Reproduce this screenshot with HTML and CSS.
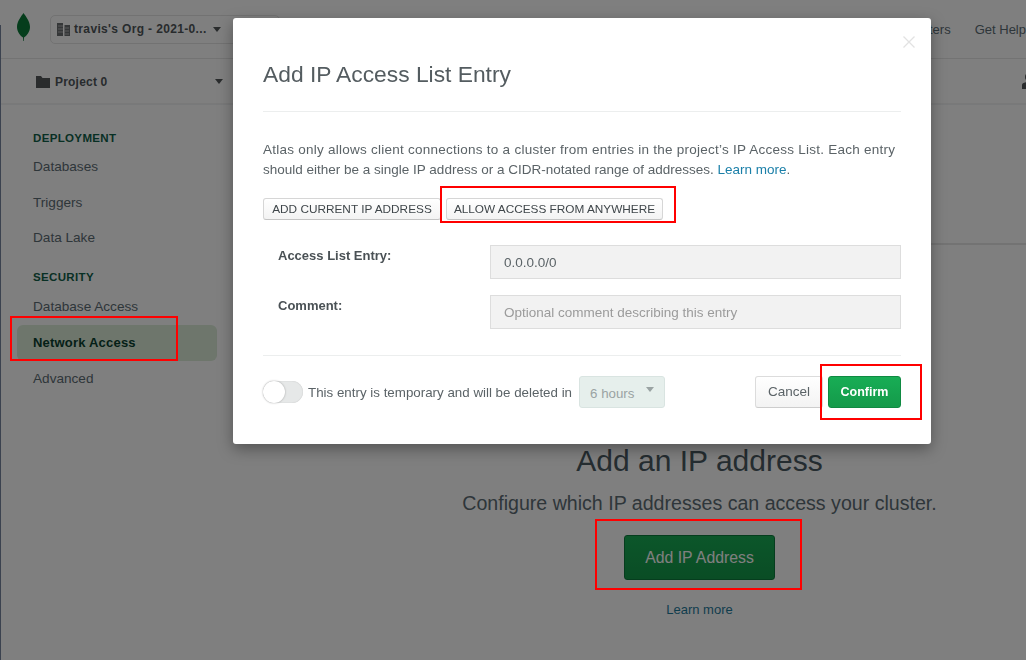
FILE: index.html
```html
<!DOCTYPE html>
<html lang="en">
<head>
<meta charset="utf-8">
<title>Add IP Access List Entry</title>
<link rel="stylesheet" href="styles.css">
</head>
<body>
<div class="app">
  <span class="edge"></span>
  <header class="topbar">
    <svg class="leaf" width="13" height="28" viewBox="0 0 13 28"><path d="M6.500 0C8.500 3 13 8 13 14C13 19 9.500 23 7 24.500L6.800 28H6.200L6 24.500C3.500 23 0 19 0 14C0 8 4.500 3 6.500 0Z" fill="#0b7a38"/></svg>
    <div class="org">
      <svg class="org-icon" width="13" height="13" viewBox="0 0 13 13"><path d="M0 0H6V13H0ZM7.500 2H13V13H7.500Z" fill="#6a6f71"/><path d="M1 3H6M1 6H6M1 9H6M7.500 5H12M7.500 8H12M7.500 11H12" stroke="#b4b4b4" stroke-width="1"/></svg>
      <span class="org-name">travis's Org - 2021-0...</span>
      <span class="caret"></span>
    </div>
    <nav class="toplinks"><span>Clusters</span><span>Get Help</span></nav>
  </header>
  <div class="projectbar">
    <div class="project">
      <svg width="14" height="12" viewBox="0 0 14 12"><path d="M0 0H5L6.500 2H14V12H0Z" fill="#54595b"/></svg>
      <span class="project-name">Project 0</span>
      <span class="caret"></span>
    </div>
    <svg class="user" width="12" height="16" viewBox="0 0 12 16"><circle cx="7" cy="4" r="4" fill="#54595b"/><path d="M0 16V12C0 10 2 9 7 9S14 10 14 12V16Z" fill="#54595b"/></svg>
  </div>
  <div class="main">
    <aside class="sidebar">
      <h4 class="side-head">DEPLOYMENT</h4>
      <a class="side-item">Databases</a>
      <a class="side-item">Triggers</a>
      <a class="side-item">Data Lake</a>
      <h4 class="side-head second">SECURITY</h4>
      <a class="side-item">Database Access</a>
      <a class="side-item active">Network Access</a>
      <a class="side-item">Advanced</a>
    </aside>
    <section class="content">
      <div class="content-rule"></div>
      <div class="empty">
        <h2 class="empty-title">Add an IP address</h2>
        <p class="empty-sub">Configure which IP addresses can access your cluster.</p>
        <button class="add-btn">Add IP Address</button>
        <a class="empty-link">Learn more</a>
      </div>
    </section>
  </div>
</div>

<div class="overlay"></div>

<div class="modal">
  <span class="close">
    <svg width="12" height="12" viewBox="0 0 12 12"><path d="M0.500 0.500L11.500 11.500M11.500 0.500L0.500 11.500" stroke="#e2e2e2" stroke-width="1.300"/></svg>
  </span>
  <h1 class="modal-title">Add IP Access List Entry</h1>
  <p class="intro"><span class="intro-first">Atlas only allows client connections to a cluster from entries in the project’s IP Access List. Each entry</span> <span class="intro-second">should either be a single IP address or a CIDR-notated range of addresses. <a class="link">Learn more</a>.</span></p>
  <div class="quick">
    <button class="mini mini-current">ADD CURRENT IP ADDRESS</button>
    <button class="mini mini-any">ALLOW ACCESS FROM ANYWHERE</button>
  </div>
  <div class="field">
    <label class="field-label">Access List Entry:</label>
    <div class="input">0.0.0.0/0</div>
  </div>
  <div class="field">
    <label class="field-label">Comment:</label>
    <div class="input placeholder">Optional comment describing this entry</div>
  </div>
  <footer class="modal-foot">
    <span class="toggle"><span class="knob"></span></span>
    <span class="temp">This entry is temporary and will be deleted in</span>
    <span class="select">6 hours<span class="select-caret"></span></span>
    <span class="foot-actions">
      <button class="cancel">Cancel</button>
      <button class="confirm">Confirm</button>
    </span>
  </footer>
</div>

<div class="mark mark-nav"></div>
<div class="mark mark-allow"></div>
<div class="mark mark-confirm"></div>
<div class="mark mark-add"></div>
</body>
</html>
```

FILE: styles.css
```css
* { box-sizing: border-box; }
html, body { margin: 0; height: 100%; overflow: hidden; }
body { font-family: "Liberation Sans", Arial, sans-serif; color: #3d4f58; background: #fff; }
h1, h2, h4, p { margin: 0; }
button { font-family: inherit; cursor: pointer; }

.app { position: relative; width: 1026px; height: 660px; display: flex; flex-direction: column; padding-left: 1px; }
.edge { position: absolute; left: 0; top: 25px; bottom: 0; width: 1px; background: #76849f; }
.topbar { height: 59px; flex: none; display: flex; align-items: center; padding-left: 16px; border-bottom: 1px solid #e7e7e7; background: #fff; }
.leaf { margin-top: -4px; flex: none; }
.org { margin-left: 20px; width: 230px; height: 29px; display: flex; align-items: center; gap: 4px; padding-left: 6px; border: 1px solid #e4e4e4; border-radius: 5px; }
.org-name { font-size: 12px; font-weight: bold; color: #50575b; letter-spacing: .35px; white-space: nowrap; }
.caret { width: 0; height: 0; border-left: 4px solid transparent; border-right: 4px solid transparent; border-top: 5px solid #54595b; }
.org .caret { margin-left: 2px; }
.toplinks { margin-left: auto; display: flex; gap: 24px; font-size: 13px; color: #5c6c75; white-space: nowrap; }
.projectbar { height: 45px; flex: none; display: flex; align-items: center; justify-content: space-between; padding-left: 35px; border-bottom: 1px solid #f2f2f2; background: #fff; }
.project { width: 187px; display: flex; align-items: center; gap: 5px; margin-top: 1px; }
.project-name { font-size: 12px; font-weight: bold; color: #50575b; flex: 1; letter-spacing: .2px; }
.user { margin-right: -8px; }

.main { flex: 1; display: flex; min-height: 0; border-top: 1px solid #f0f3f5; background: #fff; }
.sidebar { width: 232px; flex: none; padding: 26px 16px 0 16px; display: flex; flex-direction: column; }
.side-head { font-size: 11.500px; font-weight: bold; letter-spacing: .35px; color: #116149; height: 18px; line-height: 15px; padding-left: 16px; }
.side-head.second { margin-top: 14px; height: 19px; }
.side-item { display: block; font-size: 13.600px; line-height: 36px; height: 35.500px; padding-left: 16px; color: #5d6c74; }
.side-item.active { font-size: 13px; font-weight: bold; color: #09402f; background: #dcecd8; border-radius: 6px; letter-spacing: .2px; margin-top: 1px; }

.content { flex: 1; position: relative; min-width: 0; }
.content-rule { margin-top: 138px; height: 2px; background: #e7e7e7; }
.empty { display: flex; flex-direction: column; align-items: center; padding: 196px 0 0 140px; }
.empty-title { font-size: 30px; font-weight: normal; line-height: 40px; color: #4a5a62; }
.empty-sub { font-size: 19.600px; line-height: 26px; margin-top: 9px; color: #5d6c74; white-space: nowrap; }
.add-btn { margin-top: 19px; width: 151px; height: 45px; border: 1px solid #0d7a3c; border-radius: 3px; background: linear-gradient(#18ad55, #149a4a); color: #fff; font-size: 15.800px; }
.empty-link { margin-top: 21px; font-size: 13px; line-height: 18px; color: #1f7a9b; }

.overlay { position: fixed; inset: 0; background: rgba(0, 0, 0, .5); }

.modal { position: absolute; left: 233px; top: 18px; width: 698px; height: 426px; padding: 0 30px; background: #fff; border-radius: 3px; box-shadow: 0 5px 15px rgba(0, 0, 0, .35); display: flex; flex-direction: column; }
.close { position: absolute; top: 18px; right: 16px; line-height: 0; }
.modal-title { font-size: 22.800px; font-weight: normal; color: #545c60; height: 94px; line-height: 113px; border-bottom: 1px solid #eceeee; flex: none; }
.intro { margin-top: 28px; font-size: 13.500px; line-height: 20px; color: #5b6367; }
.intro-first, .intro-second { display: block; white-space: nowrap; }
.intro-first { letter-spacing: .25px; }
.link { color: #1a7fa8; }
.quick { display: flex; gap: 5px; margin-top: 18px; }
.mini { height: 22px; padding: 0; font-size: 11.800px; color: #3f464a; white-space: nowrap; background: linear-gradient(#fff, #f3f3f3); border: 1px solid #d6d6d6; border-bottom-color: #c4c4c4; border-radius: 3px; }
.mini-current { width: 178px; }
.mini-any { width: 217px; }
.field { display: flex; align-items: flex-start; padding-left: 15px; margin-top: 25px; height: 33px; }
.field + .field { margin-top: 17px; }
.field-label { width: 212px; font-size: 13px; font-weight: bold; color: #4a5155; line-height: 21px; }
.input { width: 411px; height: 34px; padding-left: 13px; line-height: 33px; font-size: 13.500px; color: #5b6367; background: #f2f2f2; border: 1px solid #ddd; }
.input.placeholder { color: #9b9b9b; }
.modal-foot { margin-top: 27px; height: 60px; border-top: 1px solid #eceeee; display: flex; align-items: center; padding-top: 12px; }
.toggle { width: 40px; height: 22px; border-radius: 11px; background: #e6e8e8; position: relative; flex: none; box-shadow: inset 0 0 1px rgba(0, 0, 0, .25); }
.knob { position: absolute; left: 0; top: 0; width: 22px; height: 22px; border-radius: 50%; background: #fff; box-shadow: 0 0 2px rgba(0, 0, 0, .35); }
.temp { margin-left: 5px; padding-top: 1px; font-size: 13.350px; color: #5b6367; white-space: nowrap; }
.select { margin-left: 7px; width: 86px; height: 32px; padding-left: 10px; border: 1px solid #d9e4e1; border-radius: 3px; background: #e6efec; color: #9aa3a3; font-size: 13.300px; line-height: 33px; position: relative; }
.select-caret { position: absolute; top: 10px; right: 10px; width: 0; height: 0; border-left: 4px solid transparent; border-right: 4px solid transparent; border-top: 5px solid #9aa3a3; }
.foot-actions { margin-left: auto; display: flex; gap: 5px; }
.cancel { width: 68px; height: 32px; font-size: 13.500px; color: #5b6367; background: linear-gradient(#fff, #f3f3f3); border: 1px solid #dcdcdc; border-bottom-color: #cdcdcd; border-radius: 3px; padding: 0; }
.confirm { width: 73px; height: 32px; font-size: 12.500px; font-weight: bold; color: #fff; background: linear-gradient(#18ad55, #149a4a); border: 1px solid #0f8a42; border-radius: 3px; padding: 0; }

.mark { position: absolute; border: 2px solid #f00; }
.mark-nav { left: 10px; top: 316px; width: 168px; height: 45px; }
.mark-allow { left: 440px; top: 186px; width: 236px; height: 37px; }
.mark-confirm { left: 820px; top: 364px; width: 102px; height: 56px; }
.mark-add { left: 595px; top: 519px; width: 207px; height: 71px; }
```
